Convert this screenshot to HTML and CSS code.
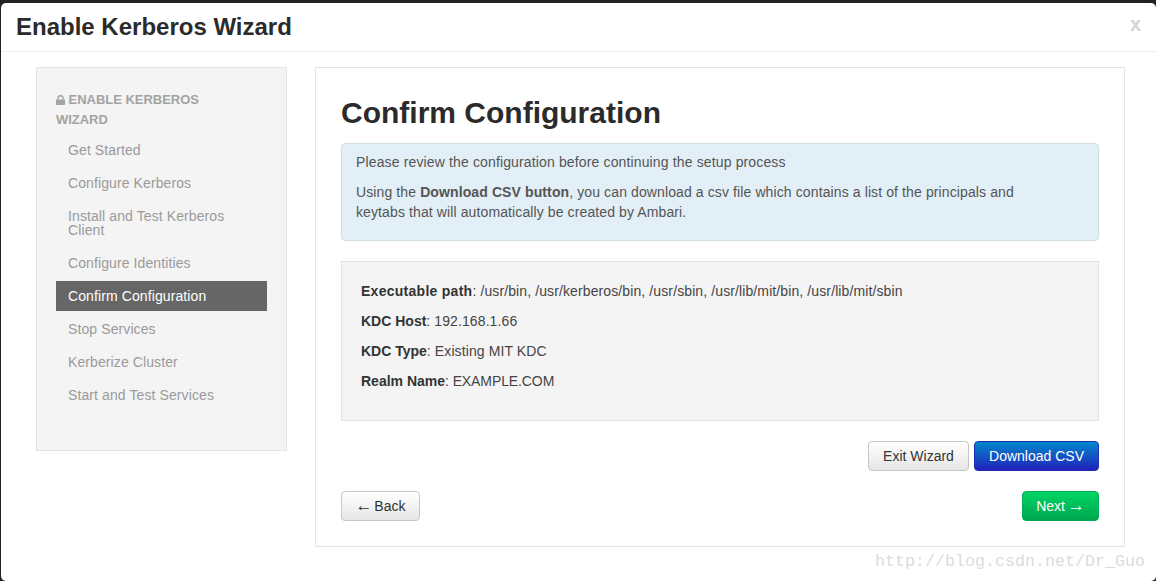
FILE: index.html
```html
<!DOCTYPE html>
<html lang="en">
<head>
<meta charset="utf-8">
<title>Enable Kerberos Wizard</title>
<link rel="stylesheet" href="styles.css">
</head>
<body>
<div class="modal">
  <header class="modal-header">
    <h3 class="modal-title">Enable Kerberos Wizard</h3>
    <span class="close">x</span>
  </header>
  <div class="modal-body">
    <aside class="sidebar">
      <div class="nav-title">
        <svg class="lock" width="9" height="10" viewBox="0 0 9 10"><path d="M0 4.4h9v4.9a.7.7 0 0 1-.7.7H.7a.7.7 0 0 1-.7-.7z" fill="#a3a3a3"/><path d="M2 4.6V3a2.5 2.3 0 0 1 5 0v1.6" fill="none" stroke="#a3a3a3" stroke-width="1.5"/></svg>
        ENABLE KERBEROS WIZARD
      </div>
      <ul class="nav-list">
        <li class="nav-item">Get Started</li>
        <li class="nav-item">Configure Kerberos</li>
        <li class="nav-item">Install and Test Kerberos Client</li>
        <li class="nav-item">Configure Identities</li>
        <li class="nav-item active">Confirm Configuration</li>
        <li class="nav-item">Stop Services</li>
        <li class="nav-item">Kerberize Cluster</li>
        <li class="nav-item">Start and Test Services</li>
      </ul>
    </aside>
    <main class="content">
      <h2 class="page-title">Confirm Configuration</h2>
      <div class="alert">
        <p class="alert-line">Please review the configuration before continuing the setup process</p>
        <p class="alert-para">Using the <b>Download CSV button</b>, you can download a csv file which contains a list of the principals and keytabs that will automatically be created by Ambari.</p>
      </div>
      <div class="well">
        <p class="row row-wide"><b>Executable path</b>: /usr/bin, /usr/kerberos/bin, /usr/sbin, /usr/lib/mit/bin, /usr/lib/mit/sbin</p>
        <p class="row"><b>KDC Host</b>: 192.168.1.66</p>
        <p class="row"><b>KDC Type</b>: Existing MIT KDC</p>
        <p class="row row-tight"><b>Realm Name</b>: EXAMPLE.COM</p>
      </div>
      <div class="actions">
        <button class="btn btn-default btn-exit">Exit Wizard</button>
        <button class="btn btn-blue btn-csv">Download CSV</button>
      </div>
      <div class="footer-actions">
        <button class="btn btn-default btn-back"><span class="arrow">←</span> Back</button>
        <button class="btn btn-green btn-next">Next <span class="arrow">→</span></button>
      </div>
    </main>
  </div>
</div>
<div class="watermark">http://blog.csdn.net/Dr_Guo</div>
</body>
</html>
```

FILE: styles.css
```css
* { box-sizing: border-box; }
html, body { margin: 0; height: 100%; }
body {
  position: relative;
  width: 1156px;
  height: 581px;
  overflow: hidden;
  background: #222;
  font-family: "Liberation Sans", Arial, sans-serif;
  font-size: 14px;
  color: #333;
  padding: 3px 0 0 1px;
}
.modal {
  height: 578px;
  background: #fff;
  border-radius: 5px;
}
.modal-header {
  height: 49px;
  padding: 0 15px;
  border-bottom: 1px solid #eee;
  display: flex;
  align-items: center;
  justify-content: space-between;
}
.modal-title {
  margin: 0;
  font-size: 24px;
  font-weight: bold;
  line-height: 48px;
  color: #2b2b2b;
}
.close {
  font-size: 20px;
  font-weight: bold;
  color: #d4d4d4;
  line-height: 40px;
  margin-bottom: 6px;
}
.modal-body {
  display: flex;
  align-items: flex-start;
  padding: 15px 0 0 35px;
  gap: 28px;
}
.sidebar {
  width: 251px;
  height: 384px;
  background: #f4f4f4;
  border: 1px solid #e3e3e3;
  padding: 19px 19px 0;
}
.nav-title {
  font-size: 13px;
  font-weight: bold;
  line-height: 20px;
  color: #a3a3a3;
  width: 190px;
  margin-top: 3px;
  letter-spacing: -0.03px;
}
.lock { display: inline-block; vertical-align: -0.5px; }
.nav-list {
  list-style: none;
  margin: 5px 0 0;
  padding: 0;
  width: 211px;
}
.nav-item {
  padding: 8px 12px 8px;
  margin-bottom: 3px;
  font-size: 14px;
  line-height: 14px;
  letter-spacing: 0.1px;
  color: #9a9a9a;
}
.nav-item.active {
  background: #666;
  color: #fff;
}
.content {
  width: 810px;
  height: 480px;
  border: 1px solid #e3e3e3;
  padding: 25px;
}
.page-title {
  margin: 0;
  font-size: 30px;
  line-height: 40px;
  font-weight: bold;
  color: #2b2b2b;
  height: 50px;
}
.alert {
  height: 98px;
  padding: 8px 14px;
  background: #e2eff6;
  border: 1px solid #d0dde4;
  border-radius: 4px;
  color: #555;
  letter-spacing: 0.14px;
}
.alert-line { margin: 0 0 10px; line-height: 20px; }
.alert-para { margin: 0; line-height: 20px; width: 680px; letter-spacing: 0.11px; }
.well {
  height: 160px;
  margin-top: 20px;
  padding: 19px;
  background: #f4f4f4;
  border: 1px solid #e3e3e3;
}
.row { margin: 0 0 10px; line-height: 20px; color: #444; letter-spacing: 0.1px; }
.row b { color: #333; letter-spacing: 0; }
.row-wide { letter-spacing: 0.11px; }
.row-wide b { letter-spacing: 0.27px; }
.row-tight { letter-spacing: -0.1px; }
.actions {
  display: flex;
  justify-content: flex-end;
  gap: 5px;
  margin-top: 20px;
}
.footer-actions {
  display: flex;
  justify-content: space-between;
  margin-top: 20px;
}
.btn {
  height: 30px;
  padding: 0;
  border-radius: 4px;
  font: 14px/20px "Liberation Sans", Arial, sans-serif;
  cursor: pointer;
}
.arrow { font-size: 17px; line-height: 14px; }
.btn-default {
  background: linear-gradient(#ffffff, #e6e6e6);
  border: 1px solid #c6c6c6;
  color: #333;
}
.btn-blue {
  background: linear-gradient(#0088cc, #2222bb);
  border: 1px solid #1c2fb0;
  color: #fff;
}
.btn-green {
  background: linear-gradient(#00d563, #00a651);
  border: 1px solid #00ab55;
  color: #fff;
}
.btn-exit { width: 101px; }
.btn-csv { width: 125px; }
.btn-back { width: 79px; word-spacing: -2px; }
.btn-next { width: 77px; word-spacing: -1px; }
.watermark {
  position: absolute;
  left: 875px;
  top: 552px;
  font-family: "Liberation Mono", monospace;
  font-size: 16.67px;
  line-height: 20px;
  color: #dcdcdc;
  white-space: nowrap;
}
```
